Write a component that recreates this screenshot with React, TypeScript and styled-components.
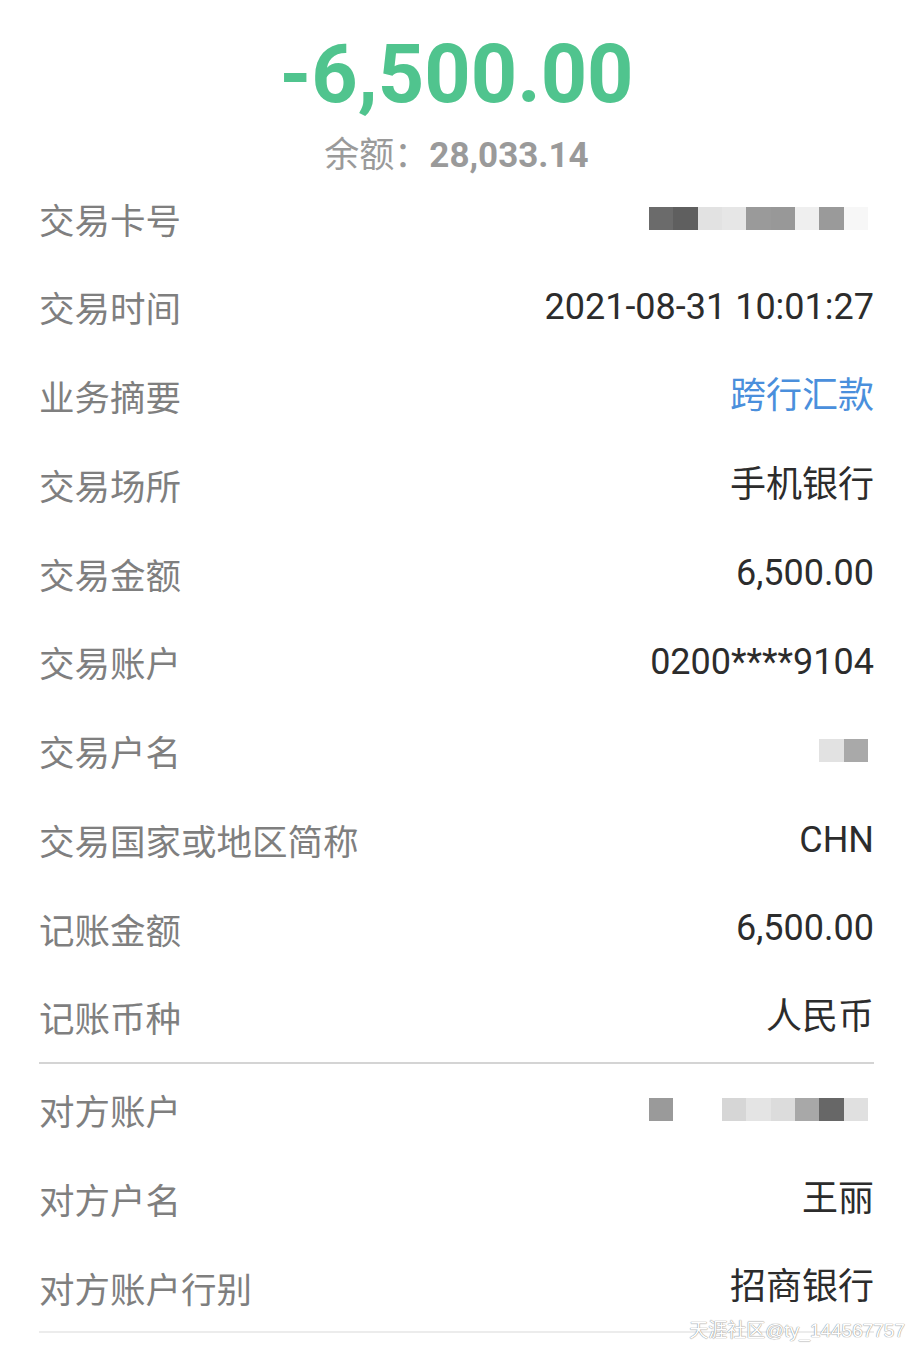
import styled, { createGlobalStyle } from "styled-components";

const GlobalStyle = createGlobalStyle`
  html, body {
    margin: 0;
    padding: 0;
    background: #ffffff;
  }
  body {
    font-family: Roboto, "Noto Sans CJK SC", sans-serif;
  }
`;

type Row = {
  label: string;
  value?: string;
  link?: boolean;
  mask?: string[];
};

const mainRows: Row[] = [
  {
    label: "交易卡号",
    mask: ["#6b6b6b", "#5f5f5f", "#e2e2e2", "#e6e6e6", "#9a9a9a", "#989898", "#efefef", "#9a9a9a", "#f7f7f7"],
  },
  { label: "交易时间", value: "2021-08-31 10:01:27" },
  { label: "业务摘要", value: "跨行汇款", link: true },
  { label: "交易场所", value: "手机银行" },
  { label: "交易金额", value: "6,500.00" },
  { label: "交易账户", value: "0200****9104" },
  { label: "交易户名", mask: ["#e2e2e2", "#a9a9a9"] },
  { label: "交易国家或地区简称", value: "CHN" },
  { label: "记账金额", value: "6,500.00" },
  { label: "记账币种", value: "人民币" },
];

const otherRows: Row[] = [
  {
    label: "对方账户",
    mask: ["#9a9a9a", "transparent", "transparent", "#d6d6d6", "#e4e4e4", "#dcdcdc", "#a8a8a8", "#676767", "#e0e0e0"],
  },
  { label: "对方户名", value: "王丽" },
  { label: "对方账户行别", value: "招商银行" },
];

const DetailRow = ({ row }: { row: Row }) => (
  <Line>
    <Label>{row.label}</Label>
    {row.mask ? (
      <Mask>
        {row.mask.map((c, i) => (
          <MaskCell key={i} $color={c} />
        ))}
      </Mask>
    ) : (
      <Value $link={row.link}>{row.value}</Value>
    )}
  </Line>
);

const App = () => (
  <>
    <GlobalStyle />
    <Page>
      <Header>
        <Amount>-6,500.00</Amount>
        <Balance>
          余额：<BalanceNum>28,033.14</BalanceNum>
        </Balance>
      </Header>
      <Section $top={1}>
        {mainRows.map((r) => (
          <DetailRow key={r.label} row={r} />
        ))}
      </Section>
      <Divider />
      <Section $top={2}>
        {otherRows.map((r) => (
          <DetailRow key={r.label} row={r} />
        ))}
      </Section>
      <BottomRule />
      <Watermark>天涯社区@ty_144567757</Watermark>
    </Page>
  </>
);

export default App;

const Page = styled.div`
  position: relative;
  width: 912px;
  height: 1349px;
  box-sizing: border-box;
  padding: 34px 38px 0 39px;
  overflow: hidden;
  background: #ffffff;
`;

const Header = styled.div`
  display: flex;
  flex-direction: column;
  align-items: center;
  gap: 22px;
`;

const Amount = styled.div`
  font-family: Roboto, sans-serif;
  font-weight: 700;
  font-size: 81px;
  line-height: 82px;
  color: #50c48e;
`;

const Balance = styled.div`
  font-family: Roboto, "Noto Sans CJK SC", sans-serif;
  font-size: 35px;
  line-height: 35px;
  color: #9a9a9a;
`;

const BalanceNum = styled.span`
  font-weight: 700;
`;

const Section = styled.div<{ $top: number }>`
  display: flex;
  flex-direction: column;
  margin-top: ${({ $top }) => $top}px;
`;

const Line = styled.div`
  display: flex;
  align-items: center;
  justify-content: space-between;
  height: 88.75px;
`;

const Label = styled.span`
  font-family: "Noto Sans CJK SC", sans-serif;
  font-size: 35.5px;
  color: #7f7f7f;
  line-height: 1;
`;

const Value = styled.span<{ $link?: boolean }>`
  font-family: Roboto, "Noto Sans CJK SC", sans-serif;
  font-size: 36px;
  line-height: 1;
  color: ${({ $link }) => ($link ? "#4a8fdc" : "#2c2c2c")};
`;

const Mask = styled.div`
  display: flex;
  margin-right: 6px;
`;

const MaskCell = styled.div<{ $color: string }>`
  width: 24.33px;
  height: 23px;
  background: ${({ $color }) => $color};
`;

const Divider = styled.div`
  height: 2px;
  background: #d4d4d4;
`;

const BottomRule = styled.div`
  margin-top: -1px;
  height: 2px;
  background: #ececec;
`;

const Watermark = styled.div`
  position: absolute;
  right: 7px;
  bottom: 7px;
  font-family: "Liberation Sans", "Noto Sans CJK SC", sans-serif;
  font-size: 19px;
  color: #ffffff;
  text-shadow: 0 0 1px #8a8a8a, 0 0 1px #8a8a8a;
`;
